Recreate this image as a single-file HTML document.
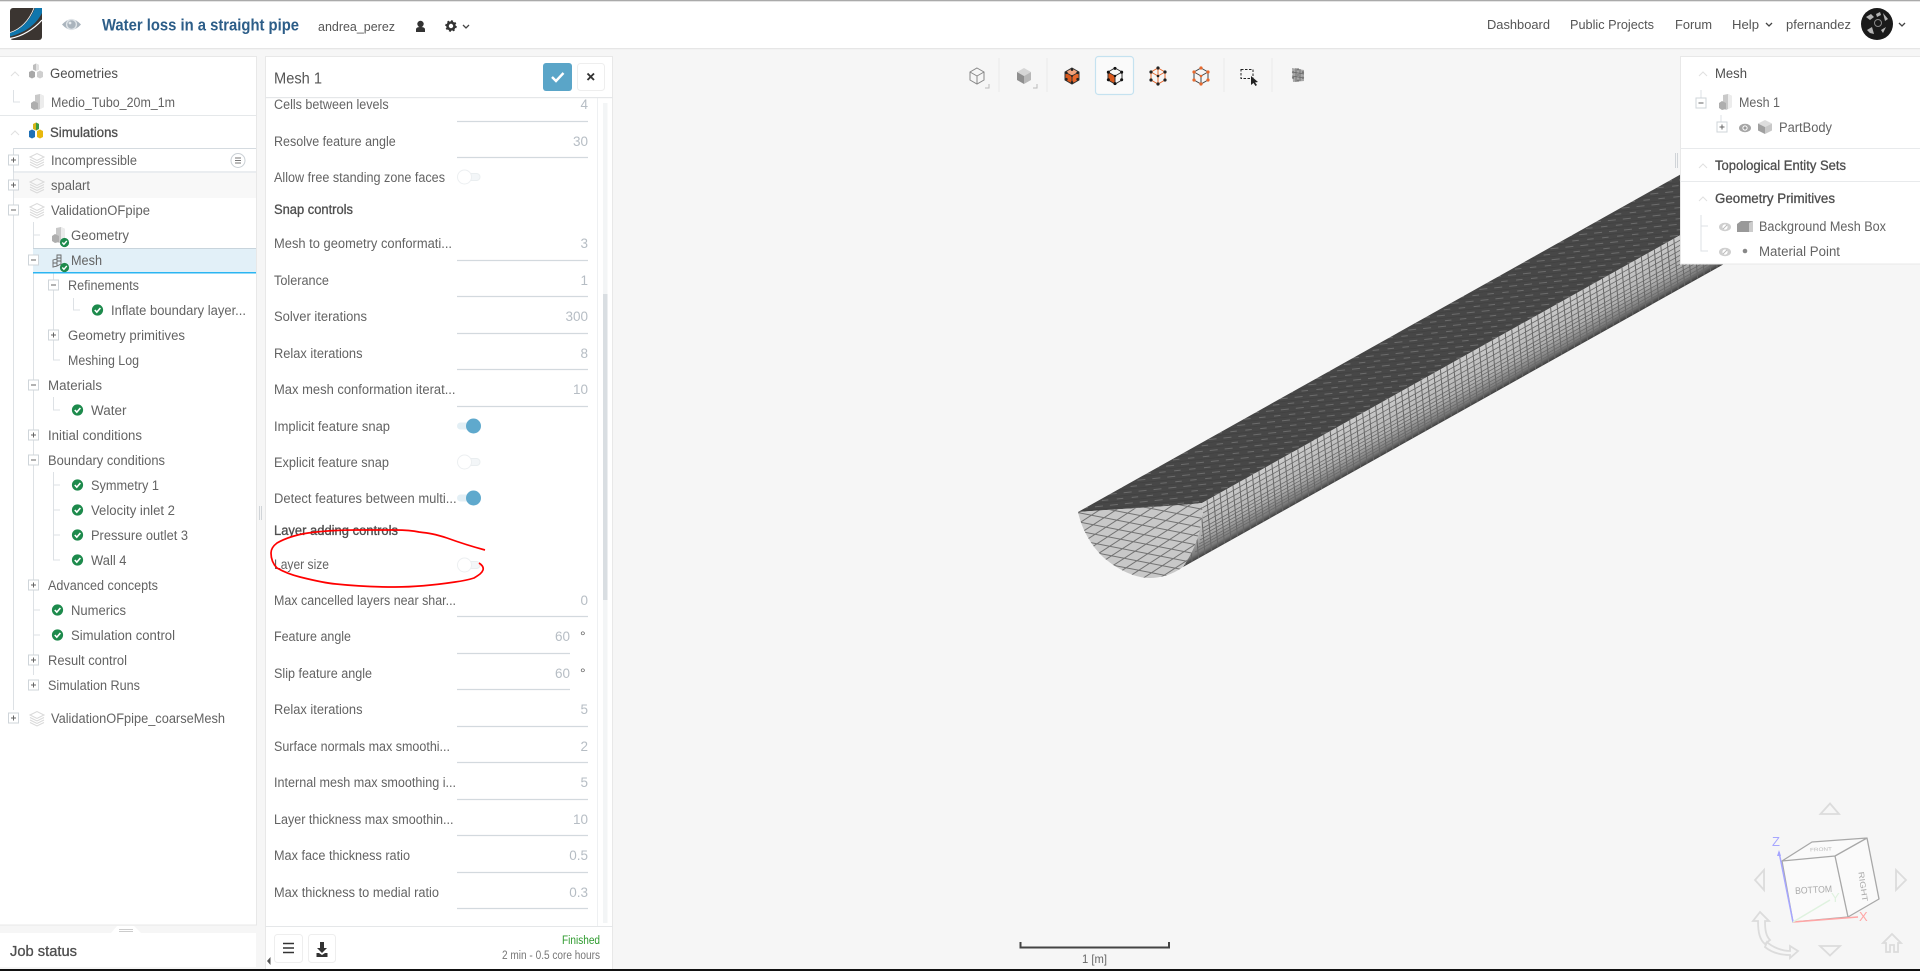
<!DOCTYPE html>
<html><head><meta charset="utf-8"><title>Water loss in a straight pipe</title>
<style>
html,body{margin:0;padding:0;background:#f6f6f6;overflow:hidden}
svg{display:block;position:absolute;left:0;top:0}
text{font-family:"Liberation Sans",sans-serif;font-size:13.5px;fill:#636363}
.b{fill:#4e4e4e;stroke:#4e4e4e;stroke-width:.3}
.s{font-size:14px;fill:#4e4e4e}
.sb{font-size:13.5px;fill:#4e4e4e;stroke:#4e4e4e;stroke-width:.3}
.v{fill:#b6bdc4;text-anchor:end}
.u{stroke:#d3d9de;stroke-width:1.2}
.c{stroke:#dde1e5;stroke-width:1;fill:none}
.nav{fill:none;stroke:#dcdcdc;stroke-width:1.8}
</style></head><body>
<svg width="1920" height="971" viewBox="0 0 1920 971" xmlns="http://www.w3.org/2000/svg">
<defs>
<pattern id="dash" width="15" height="11" patternUnits="userSpaceOnUse" patternTransform="rotate(-6)">
<rect width="15" height="11" fill="#474747"/>
<rect x="1" y="2" width="8" height="1" fill="#6c6c6c"/>
<rect x="8.5" y="7.5" width="8" height="1" fill="#6c6c6c"/>
<rect x="0" y="5" width="15" height=".7" fill="#404040"/>
<rect x="0" y="10" width="15" height=".7" fill="#404040"/>
</pattern>
<pattern id="cross" width="6.8" height="20" patternUnits="userSpaceOnUse" patternTransform="skewX(5)">
<rect width="1" height="20" fill="#666"/>
</pattern>
<pattern id="c1" width="9" height="9" patternUnits="userSpaceOnUse" patternTransform="rotate(11)">
<rect width="9" height="1" fill="#727272"/>
</pattern>
<pattern id="c2" width="9" height="9" patternUnits="userSpaceOnUse" patternTransform="rotate(-33)">
<rect width="9" height="1" fill="#727272"/>
</pattern>
<linearGradient id="side" gradientUnits="userSpaceOnUse" x1="1202" y1="503" x2="1225" y2="544">
<stop offset="0" stop-color="#cccccc"/><stop offset=".6" stop-color="#b0b0b0"/><stop offset=".88" stop-color="#7a7a7a"/><stop offset="1" stop-color="#3a3a3a"/>
</linearGradient>
<clipPath id="capc"><path d="M1078 512C1115 509 1165 507 1202 503C1204 525 1196 548 1183 567C1172 575 1160 578 1150 578C1135 578 1118 570 1103 557C1091 545 1082 530 1078 512Z"/></clipPath>
<clipPath id="sidec"><path d="M1202 503L1800 168V221.500L1183 567C1196 548 1204 525 1202 503Z"/></clipPath>
<g id="ck"><circle r="5.600" fill="#1d8a4c"/><path d="M-2.700 0L-.7 2.200L2.900-2" fill="none" stroke="#fff" stroke-width="1.600"/></g>
<g id="ck2"><circle r="4.600" fill="#1d8a4c"/><path d="M-2.200 0L-.6 1.800L2.300-1.600" fill="none" stroke="#fff" stroke-width="1.400"/></g>
<g id="pl"><rect x="-5" y="-5" width="10" height="10" fill="#fff" stroke="#cfd5da"/><path d="M-2.500 0H2.500M0-2.500V2.500" stroke="#666"/></g>
<g id="mn"><rect x="-5" y="-5" width="10" height="10" fill="#fff" stroke="#cfd5da"/><path d="M-2.500 0H2.500" stroke="#666"/></g>
<g id="ly" fill="none" stroke="#d9d9d9"><path d="M-7-3L0-6.500L7-3L0 .5Z"/><path d="M-7-.5L0 3L7-.5M-7 2L0 5.500L7 2M-7 4.500L0 8L7 4.500"/></g>
<g id="geo"><path d="M-2-7L3-8L7-6V5L1 8L-2 6Z" fill="#c9c9c9"/><path d="M3-8L7-6V5L3 7Z" fill="#ececec"/><path d="M-6 1L-3-1L1 1V7L-3 8L-6 6Z" fill="#aeaeae"/></g>
<g id="geos"><path d="M-3-8L0-9.500L3-8V-3.500L0-2L-3-3.500Z" fill="#bdbdbd"/><path d="M0-9.500L3-8V-3.500L0-2Z" fill="#e2e2e2"/><path d="M-7-1L-4-2.500L-1-1V4L-4 5.500L-7 4Z" fill="#a8a8a8"/><path d="M1-1L4-2.500L7-1V4L4 5.500L1 4Z" fill="#cfcfcf"/></g>
<g id="eye"><ellipse rx="6" ry="4.200" fill="#a6a6a6"/><circle r="2.600" fill="#fff"/><circle r="1.600" fill="#9a9a9a"/></g>
<g id="eyx"><ellipse rx="6" ry="4.200" fill="#cfcfcf"/><circle r="2.600" fill="#fff"/><path d="M-2 2L2-2" stroke="#bbb"/></g>
<g id="hx"><path d="M0-8L7-4V4L0 8L-7 4V-4Z"/><path d="M0 0L7-4M0 0L-7-4M0 0V8"/></g>
<g id="vb"><circle cx="0" cy="-8" r="1.600"/><circle cx="7" cy="-4" r="1.600"/><circle cx="7" cy="4" r="1.600"/><circle cx="0" cy="8" r="1.600"/><circle cx="-7" cy="4" r="1.600"/><circle cx="-7" cy="-4" r="1.600"/><circle r="1.300"/></g>
</defs>

<!-- 3D pipe -->
<path d="M1078 512L1800 107.500V168L1202 503C1165 507 1115 509 1078 512Z" fill="url(#dash)"/>
<path d="M1202 503L1800 168V221.500L1183 567C1196 548 1204 525 1202 503Z" fill="url(#side)"/>
<g clip-path="url(#sidec)">
<rect x="1170" y="90" width="750" height="490" fill="url(#cross)"/>
<g stroke="#6a6a6a" stroke-width=".8">
<path d="M1202 508L1800 173M1203 513L1800 178M1203 518L1800 183M1203 523L1800 188M1203 528L1800 193M1202 532L1800 197M1201 536L1800 201M1200 540L1800 205M1199 544L1800 209M1197 548L1800 213M1195 552L1800 216"/>
</g>
</g>
<path d="M1078 512C1115 509 1165 507 1202 503C1204 525 1196 548 1183 567C1172 575 1160 578 1150 578C1135 578 1118 570 1103 557C1091 545 1082 530 1078 512Z" fill="#c8c8c8"/>
<g clip-path="url(#capc)">
<rect x="1060" y="490" width="160" height="100" fill="url(#c1)"/>
<rect x="1060" y="490" width="160" height="100" fill="url(#c2)"/>
</g>

<!-- header -->
<rect width="1920" height="48" fill="#fff"/>
<rect width="1920" height="1.300" fill="#aaa"/>
<rect y="48" width="1920" height="1.200" fill="#e6e6e6"/>
<rect x="10" y="8" width="32" height="32" rx="3" fill="#3b3531"/>
<path d="M10 33C20 30 30 21 35 8H42V13C36 25 24 33 10 36.500Z" fill="#0f76ad"/>
<path d="M10 38.500C22 36.500 34 29 42 20" fill="none" stroke="#fff" stroke-width="1.200"/>
<path d="M10 32.500C20 29.500 29 21 34 8" fill="none" stroke="#fff" stroke-width=".8"/>
<path d="M62 24.500Q71.500 14 81 24.500Q71.500 35 62 24.500Z" fill="#aab4bd"/><circle cx="71.500" cy="24.500" r="5.600" fill="#dfe4e8"/><circle cx="71.500" cy="24.500" r="4.200" fill="#aab4bd"/><circle cx="70" cy="23" r="1.400" fill="#e6eaed"/>
<text x="102" y="30.500" textLength="197" lengthAdjust="spacingAndGlyphs" style="font-size:16.500px;font-weight:bold;fill:#2c5d88">Water loss in a straight pipe</text>
<text x="318" y="31" textLength="77" lengthAdjust="spacingAndGlyphs" style="font-size:13px;fill:#555">andrea_perez</text>
<circle cx="420.500" cy="24" r="3.200" fill="#333"/><path d="M416 32V29.500C416 27.500 418 27 420.500 27S425 27.500 425 29.500V32Z" fill="#333"/>
<circle cx="451" cy="26" r="3.500" fill="none" stroke="#333" stroke-width="2.600"/><circle cx="451" cy="26" r="5" fill="none" stroke="#333" stroke-width="1.500" stroke-dasharray="2 1.900"/>
<path d="M463 25L466 28L469 25" fill="none" stroke="#444" stroke-width="1.300"/>

<text x="1487" y="29" textLength="63" lengthAdjust="spacingAndGlyphs" style="font-size:13px;fill:#555">Dashboard</text>
<text x="1570" y="29" textLength="84" lengthAdjust="spacingAndGlyphs" style="font-size:13px;fill:#555">Public Projects</text>
<text x="1675" y="29" textLength="37" lengthAdjust="spacingAndGlyphs" style="font-size:13px;fill:#555">Forum</text>
<text x="1732" y="29" textLength="27" lengthAdjust="spacingAndGlyphs" style="font-size:13px;fill:#555">Help</text>
<path d="M1766 23L1769 26L1772 23" fill="none" stroke="#444" stroke-width="1.300"/>
<text x="1786" y="29" textLength="65" lengthAdjust="spacingAndGlyphs" style="font-size:13px;fill:#555">pfernandez</text>
<circle cx="1877" cy="24" r="16" fill="#1a1a1a"/>
<path d="M1866 17L1871 14L1874 17L1870 20ZM1883 13L1888 19L1885 21ZM1867 30L1872 27L1874 34L1870 33ZM1881 30L1886 27L1883 33ZM1876 14L1880 12L1881 15L1877 17Z" fill="#b5b5b5"/>
<circle cx="1878" cy="23" r="3.500" fill="none" stroke="#888"/>
<path d="M1899 23L1902 26L1905 23" fill="none" stroke="#444" stroke-width="1.300"/>

<!-- toolbar -->
<g stroke="#ebebeb"><path d="M999 58V92M1047 58V92M1224 58V92M1272 58V92"/></g>
<rect x="1095.500" y="56.500" width="38" height="38" rx="3" fill="#fafafa" stroke="#c5e2f0" stroke-width="1.200"/>
<use href="#hx" x="977" y="76" fill="none" stroke="#888"/>
<path d="M985 88H989V84" fill="none" stroke="#bbb"/>
<g transform="translate(1024 76)"><path d="M0-8L7-4L0 0L-7-4Z" fill="#d6d6d6"/><path d="M0 0L7-4V4L0 8Z" fill="#b8b8b8"/><path d="M0 0L-7-4V4L0 8Z" fill="#8f8f8f"/></g>
<path d="M1033 88H1037V84" fill="none" stroke="#bbb"/>
<g transform="translate(1072 76)"><path d="M0-8L7-4L0 0L-7-4Z" fill="#f0a27c"/><path d="M0 0L7-4V4L0 8Z" fill="#e8682c"/><path d="M0 0L-7-4V4L0 8Z" fill="#d9581c"/><use href="#hx" fill="none" stroke="#333"/><use href="#vb" fill="#222" transform="scale(.8)"/></g>
<g transform="translate(1115 76)"><path d="M0 0L-7-4V4L0 8Z" fill="#d9581c"/><use href="#hx" fill="none" stroke="#333"/><use href="#vb" fill="#111" transform="scale(.95)"/></g>
<g transform="translate(1158 76)"><use href="#hx" fill="none" stroke="#e8682c"/><path d="M0-8V0" stroke="#e8682c"/><use href="#vb" fill="#222"/></g>
<g transform="translate(1201 76)"><use href="#hx" fill="none" stroke="#444"/><use href="#vb" fill="#e8682c"/></g>
<rect x="1241" y="69.500" width="12" height="9" fill="none" stroke="#222" stroke-dasharray="2.500 1.500"/>
<path d="M1251 76L1251 85L1253.500 83L1255.500 86L1257 85L1255 82.500L1258 82Z" fill="#222"/>
<g transform="translate(1298 75)"><path d="M-6-7L6-5V6L-5 7Z" fill="#a8a8a8"/><path d="M-6-3L6-1M-6 1L6 3M-2-7V7M2-6V6" stroke="#666" stroke-width=".8"/><use href="#vb" fill="#777" transform="scale(.7)"/></g>

<!-- scale -->
<path d="M1020.500 942V947.500H1169V942" fill="none" stroke="#444" stroke-width="2"/>
<text x="1082" y="963" textLength="25" lengthAdjust="spacingAndGlyphs" style="font-size:12px;fill:#666">1 [m]</text>

<!-- nav cube -->
<path class="nav" d="M1830 803.500L1839 814H1820.500ZM1764 870V890L1755 880ZM1896 870V890L1906 880ZM1820 946H1840L1830 955.500Z"/>
<path class="nav" d="M1760 912L1753 921H1758C1758 933 1760 940 1765 944L1770 940C1766 936 1765 930 1765 921H1769Z" stroke-width="1.500"/>
<path class="nav" d="M1767 942C1772 947 1782 951 1790 951V946L1798 951L1790 958V955C1780 955 1771 952 1765 947Z" stroke-width="1.500"/>
<path class="nav" d="M1892 934L1901 943H1898V952H1894V945H1890V952H1886V943H1883Z" stroke-width="1.500"/>
<path d="M1782 861L1835 856L1848 917L1793 922ZM1782 861L1812 842L1867 838L1835 856ZM1835 856L1867 838L1879 899L1848 917Z" fill="#fafafa" stroke="#a8a8a8" stroke-width="1.300" stroke-linejoin="round"/>
<path d="M1793 922L1779 852" stroke="#a6a6ff" stroke-width="1.500"/><path d="M1779 850L1777 856H1781Z" fill="#a6a6ff"/>
<path d="M1793 922L1858 917" stroke="#ffa6a6" stroke-width="1.500"/>
<path d="M1793 922L1830 900" stroke="#dff2df" stroke-width="1.500"/>
<text x="1772" y="846" style="font-size:13px;fill:#a6a6ff">Z</text>
<text x="1859" y="921" style="font-size:13px;fill:#ffa6a6">X</text>
<text x="1831" y="902" style="font-size:13px;fill:#dff2df">Y</text>
<text x="1795" y="893" textLength="37" lengthAdjust="spacingAndGlyphs" transform="rotate(-3 1814 889)" style="font-size:9.500px;fill:#aaa">BOTTOM</text>
<text x="1848" y="884" textLength="30" lengthAdjust="spacingAndGlyphs" transform="rotate(82 1860 884)" style="font-size:8px;fill:#aaa">RIGHT</text>
<text x="1810" y="851" textLength="22" lengthAdjust="spacingAndGlyphs" transform="rotate(-3 1820 850)" style="font-size:5px;fill:#bbb">FRONT</text>

<!-- left panel -->
<rect x="0" y="57" width="256" height="868" fill="#fff"/>
<path d="M0 56.500H256.500V925H0" fill="none" stroke="#e8e8e8"/>
<path d="M0 115.500H256" stroke="#e5e8ea"/>
<path d="M11 76L15 72L19 76M11 135L15 131L19 135" fill="none" stroke="#e0e0e0"/>
<use href="#geos" x="36" y="73"/>
<use href="#geo" x="37" y="102"/>
<g transform="translate(36 133)"><path d="M-3-9L0-10.500L3-9V-4L0-2.500L-3-4Z" fill="#d4b61a"/><path d="M0-10.500L3-9V-4L0-2.500Z" fill="#3a9a46"/><path d="M-7-2L-4-3.500L-1-2V4L-4 5.500L-7 4Z" fill="#1f6fb5"/><path d="M1-2L4-3.500L7-2V4L4 5.500L1 4Z" fill="#e8b80e"/></g>
<text x="50" y="78" textLength="68" lengthAdjust="spacingAndGlyphs" class="s">Geometries</text>
<text x="51" y="107" textLength="124" lengthAdjust="spacingAndGlyphs">Medio_Tubo_20m_1m</text>
<text x="50" y="137" textLength="68" lengthAdjust="spacingAndGlyphs" class="sb">Simulations</text>

<path class="c" d="M13.500 90V102H20M13.500 148V710M33.500 222V675M33.500 235H40M33.500 610H40M33.500 635H40M53.500 272V360H60M73.500 298V310H80M53.500 397V410H60M53.500 472V560H60M53.500 485H60M53.500 510H60M53.500 535H60"/>

<path d="M13 148.500H256M13 172H256" stroke="#d5dbe0" fill="none"/>
<path d="M13.500 148.500V172" stroke="#d5dbe0"/>
<rect x="14" y="173" width="242" height="25" fill="#f8f8f8"/>
<rect x="33" y="248" width="223" height="24" fill="#e2f0f8"/>
<rect x="33" y="248" width="223" height="1" fill="#c8d4dc"/>
<rect x="33" y="272" width="223" height="1.500" fill="#2bb5f2"/>

<use href="#pl" x="13.500" y="160"/><use href="#pl" x="13.500" y="185"/><use href="#mn" x="13.500" y="210"/><use href="#pl" x="13.500" y="718"/>
<use href="#ly" x="37" y="160"/><use href="#ly" x="37" y="185"/><use href="#ly" x="37" y="210"/><use href="#ly" x="37" y="718"/>
<circle cx="238" cy="160.500" r="7" fill="#fff" stroke="#c9cfd4"/><path d="M235 158H241M235 160.500H241M235 163H241" stroke="#777"/>
<use href="#mn" x="33.500" y="260"/><use href="#mn" x="53.500" y="285"/><use href="#pl" x="53.500" y="335"/><use href="#mn" x="33.500" y="385"/><use href="#pl" x="33.500" y="435"/><use href="#mn" x="33.500" y="460"/><use href="#pl" x="33.500" y="585"/><use href="#pl" x="33.500" y="660"/><use href="#pl" x="33.500" y="685"/>
<use href="#geo" x="58" y="235"/><use href="#ck2" x="64.500" y="242.500"/>
<g transform="translate(58 261)" fill="none" stroke="#666" stroke-width=".9"><path d="M-1-6L3-6V3L-1 5ZM-5-1L-1-2V5L-5 6ZM-1-3H3M-1 0H3M-5 2H-1"/></g><use href="#ck2" x="64.500" y="267.500"/>
<use href="#ck" x="97.500" y="310"/><use href="#ck" x="77.500" y="410"/><use href="#ck" x="77.500" y="485"/><use href="#ck" x="77.500" y="510"/><use href="#ck" x="77.500" y="535"/><use href="#ck" x="77.500" y="560"/><use href="#ck" x="57.500" y="610"/><use href="#ck" x="57.500" y="635"/>

<text x="51" y="165" textLength="86" lengthAdjust="spacingAndGlyphs">Incompressible</text>
<text x="51" y="190" textLength="39" lengthAdjust="spacingAndGlyphs">spalart</text>
<text x="51" y="215" textLength="99" lengthAdjust="spacingAndGlyphs">ValidationOFpipe</text>
<text x="71" y="240" textLength="58" lengthAdjust="spacingAndGlyphs">Geometry</text>
<text x="71" y="265" textLength="31" lengthAdjust="spacingAndGlyphs">Mesh</text>
<text x="68" y="290" textLength="71" lengthAdjust="spacingAndGlyphs">Refinements</text>
<text x="111" y="315" textLength="135" lengthAdjust="spacingAndGlyphs">Inflate boundary layer...</text>
<text x="68" y="340" textLength="117" lengthAdjust="spacingAndGlyphs">Geometry primitives</text>
<text x="68" y="365" textLength="71" lengthAdjust="spacingAndGlyphs">Meshing Log</text>
<text x="48" y="390" textLength="54" lengthAdjust="spacingAndGlyphs">Materials</text>
<text x="91" y="415" textLength="35.500" lengthAdjust="spacingAndGlyphs">Water</text>
<text x="48" y="440" textLength="94" lengthAdjust="spacingAndGlyphs">Initial conditions</text>
<text x="48" y="465" textLength="117" lengthAdjust="spacingAndGlyphs">Boundary conditions</text>
<text x="91" y="490" textLength="68" lengthAdjust="spacingAndGlyphs">Symmetry 1</text>
<text x="91" y="515" textLength="84" lengthAdjust="spacingAndGlyphs">Velocity inlet 2</text>
<text x="91" y="540" textLength="97" lengthAdjust="spacingAndGlyphs">Pressure outlet 3</text>
<text x="91" y="565" textLength="35.500" lengthAdjust="spacingAndGlyphs">Wall 4</text>
<text x="48" y="590" textLength="110" lengthAdjust="spacingAndGlyphs">Advanced concepts</text>
<text x="71" y="615" textLength="55" lengthAdjust="spacingAndGlyphs">Numerics</text>
<text x="71" y="640" textLength="104" lengthAdjust="spacingAndGlyphs">Simulation control</text>
<text x="48" y="665" textLength="79" lengthAdjust="spacingAndGlyphs">Result control</text>
<text x="48" y="690" textLength="92" lengthAdjust="spacingAndGlyphs">Simulation Runs</text>
<text x="51" y="723" textLength="174" lengthAdjust="spacingAndGlyphs">ValidationOFpipe_coarseMesh</text>

<!-- job status -->
<rect x="0" y="933" width="256" height="34" fill="#fff"/>
<path d="M111 933L117 926H134L141 933Z" fill="#fff"/>
<path d="M119 929.500H133M119 931.500H133" stroke="#ccc" fill="none"/>
<text x="10" y="956" textLength="67" lengthAdjust="spacingAndGlyphs" style="font-size:15px;fill:#4e4e4e;stroke:#4e4e4e;stroke-width:.3">Job status</text>
<path d="M259.500 506V520M261.500 506V520" stroke="#d0d4d8"/>

<!-- mesh panel -->
<rect x="265" y="57" width="348" height="912" fill="#fff"/>
<path d="M265 56.500H613M265.500 57V969M612.500 57V969" stroke="#e8e8e8" fill="none"/>
<rect x="603" y="103" width="4.500" height="820" fill="#f3f5f6"/>
<rect x="603" y="294" width="4.500" height="306" fill="#d9dee2"/>
<path d="M597.500 97V926" stroke="#eef0f2"/>

<path class="u" d="M457 121.500H588M457 157.500H588M457 260.500H588M457 296.500H588M457 333.500H588M457 369.500H588M457 406.500H588M457 616.500H588M457 653.500H570M457 689.500H570M457 726.500H588M457 762.500H588M457 799.500H588M457 835.500H588M457 872.500H588M457 908.500H588"/>

<text x="274" y="109" textLength="114.600" lengthAdjust="spacingAndGlyphs">Cells between levels</text><text x="588" y="109" class="v">4</text>
<text x="274" y="146" textLength="121.700" lengthAdjust="spacingAndGlyphs">Resolve feature angle</text><text x="588" y="146" class="v">30</text>
<text x="274" y="182" textLength="171" lengthAdjust="spacingAndGlyphs">Allow free standing zone faces</text>
<text x="274" y="214" textLength="79" lengthAdjust="spacingAndGlyphs" class="b">Snap controls</text>
<text x="274" y="248" textLength="178" lengthAdjust="spacingAndGlyphs">Mesh to geometry conformati...</text><text x="588" y="248" class="v">3</text>
<text x="274" y="285" textLength="55" lengthAdjust="spacingAndGlyphs">Tolerance</text><text x="588" y="285" class="v">1</text>
<text x="274" y="321" textLength="93" lengthAdjust="spacingAndGlyphs">Solver iterations</text><text x="588" y="321" class="v">300</text>
<text x="274" y="358" textLength="88.500" lengthAdjust="spacingAndGlyphs">Relax iterations</text><text x="588" y="358" class="v">8</text>
<text x="274" y="394" textLength="181.500" lengthAdjust="spacingAndGlyphs">Max mesh conformation iterat...</text><text x="588" y="394" class="v">10</text>
<text x="274" y="431" textLength="116" lengthAdjust="spacingAndGlyphs">Implicit feature snap</text>
<text x="274" y="467" textLength="115" lengthAdjust="spacingAndGlyphs">Explicit feature snap</text>
<text x="274" y="503" textLength="182.600" lengthAdjust="spacingAndGlyphs">Detect features between multi...</text>
<text x="274" y="535" textLength="124" lengthAdjust="spacingAndGlyphs" class="b">Layer adding controls</text>
<text x="274" y="569" textLength="55" lengthAdjust="spacingAndGlyphs">Layer size</text>
<text x="274" y="605" textLength="182" lengthAdjust="spacingAndGlyphs">Max cancelled layers near shar...</text><text x="588" y="605" class="v">0</text>
<text x="274" y="641" textLength="77" lengthAdjust="spacingAndGlyphs">Feature angle</text><text x="570" y="641" class="v">60</text><text x="580" y="641" style="font-size:14px">°</text>
<text x="274" y="678" textLength="98" lengthAdjust="spacingAndGlyphs">Slip feature angle</text><text x="570" y="678" class="v">60</text><text x="580" y="678" style="font-size:14px">°</text>
<text x="274" y="714" textLength="88.500" lengthAdjust="spacingAndGlyphs">Relax iterations</text><text x="588" y="714" class="v">5</text>
<text x="274" y="751" textLength="176" lengthAdjust="spacingAndGlyphs">Surface normals max smoothi...</text><text x="588" y="751" class="v">2</text>
<text x="274" y="787" textLength="182" lengthAdjust="spacingAndGlyphs">Internal mesh max smoothing i...</text><text x="588" y="787" class="v">5</text>
<text x="274" y="824" textLength="179.500" lengthAdjust="spacingAndGlyphs">Layer thickness max smoothin...</text><text x="588" y="824" class="v">10</text>
<text x="274" y="860" textLength="136" lengthAdjust="spacingAndGlyphs">Max face thickness ratio</text><text x="588" y="860" class="v">0.5</text>
<text x="274" y="897" textLength="165" lengthAdjust="spacingAndGlyphs">Max thickness to medial ratio</text><text x="588" y="897" class="v">0.3</text>
<text x="274" y="936" textLength="120" lengthAdjust="spacingAndGlyphs">Min medial ranging angle</text><text x="570" y="936" class="v">90</text><text x="580" y="936" style="font-size:14px">°</text>

<!-- toggles -->
<g transform="translate(0 177)"><rect x="460" y="-3.500" width="20" height="7" rx="3.500" fill="#f3f6f8" stroke="#eaeef0"/><circle cx="464.500" r="7" fill="#fff" stroke="#eceff1"/></g>
<g transform="translate(0 426)"><rect x="457" y="-3.500" width="20" height="7" rx="3.500" fill="#e3eff5"/><circle cx="473.500" r="7.500" fill="#5fa9cd"/></g>
<g transform="translate(0 462)"><rect x="460" y="-3.500" width="20" height="7" rx="3.500" fill="#f3f6f8" stroke="#eaeef0"/><circle cx="464.500" r="7" fill="#fff" stroke="#eceff1"/></g>
<g transform="translate(0 498)"><rect x="457" y="-3.500" width="20" height="7" rx="3.500" fill="#e3eff5"/><circle cx="473.500" r="7.500" fill="#5fa9cd"/></g>
<g transform="translate(0 565)"><rect x="460" y="-3.500" width="20" height="7" rx="3.500" fill="#f3f6f8" stroke="#eaeef0"/><circle cx="464.500" r="7" fill="#fff" stroke="#eceff1"/></g>

<!-- panel header -->
<rect x="266" y="57" width="346" height="40" fill="#fff"/>
<rect x="265" y="97" width="348" height="1.200" fill="#e5e7e9"/>
<text x="274" y="83.500" textLength="48" lengthAdjust="spacingAndGlyphs" style="font-size:15.500px;fill:#555">Mesh 1</text>
<rect x="543" y="63" width="29" height="28" rx="3" fill="#5aa5c8"/>
<path d="M552 77L556 81L563.500 73" fill="none" stroke="#fff" stroke-width="2.400"/>
<rect x="577.500" y="63.500" width="27" height="27" rx="3" fill="#fff" stroke="#eeeeee"/>
<path d="M587.500 73.500L594 80M594 73.500L587.500 80" stroke="#333" stroke-width="1.900"/>

<!-- panel footer -->
<rect x="266" y="926" width="346" height="43" fill="#fff"/>
<rect x="265" y="926" width="348" height="1" fill="#e5e7e9"/>
<rect x="274.500" y="934.500" width="28" height="28" rx="3" fill="#fff" stroke="#eeeeee"/>
<rect x="308.500" y="934.500" width="27" height="28" rx="3" fill="#fff" stroke="#eeeeee"/>
<path d="M283 943.500H294M283 948H294M283 952.500H294" stroke="#333" stroke-width="1.500"/>
<path d="M320 942H324V948H327L322 953L317 948H320ZM316.500 953H319L322 955L325 953H327.500V957H316.500Z" fill="#333"/>
<path d="M270.500 957V965L267 961Z" fill="#555"/>
<text x="562" y="944" textLength="38" lengthAdjust="spacingAndGlyphs" style="font-size:11.500px;fill:#2d9a2d">Finished</text>
<text x="502" y="959" textLength="98" lengthAdjust="spacingAndGlyphs" style="font-size:11.500px;fill:#777">2 min - 0.5 core hours</text>

<!-- red annotation -->
<path d="M485 550C470 546 458 542 447 538C435 534 428 533 419 532C410 530 400 530 395 530C380 530 368 530 356 530C338 530 322 531 308 533C295 535 284 539 277 543C273 546 271 549 271 553C271 559 273 564 277 568C284 572 292 575 300 577C312 580 324 583 336 584C355 586 375 587 395 587C415 587 435 585 455 582C462 581 468 580 474 578C479 575 482 573 483 570C484 567 482 565 479 563" fill="none" stroke="#f00" stroke-width="1.700"/>

<!-- right panel -->
<rect x="1680" y="57" width="240" height="207" fill="#fff"/>
<path d="M1680.500 57V264H1920M1680 56.500H1920" stroke="#e8e8e8" fill="none"/>
<path d="M1675.500 153V168M1677.500 153V168" stroke="#d0d4d8"/>
<path d="M1680 148.500H1920M1680 181.500H1920" stroke="#e8eaec"/>
<path d="M1699 76L1703 72L1707 76M1699 168L1703 164L1707 168M1699 201L1703 197L1707 201" fill="none" stroke="#e0e0e0"/>
<path class="c" d="M1701 90V98M1721 115V122M1701 215V251H1708M1701 226H1708"/>
<use href="#mn" x="1701" y="103"/><use href="#pl" x="1722" y="127"/>
<use href="#geo" x="1725" y="102"/>
<use href="#eye" x="1745" y="128"/>
<g transform="translate(1765 127)"><path d="M0-7L7-3.500L0 0L-7-3.500Z" fill="#ddd"/><path d="M0 0L7-3.500V3.500L0 7Z" fill="#c8c8c8"/><path d="M0 0L-7-3.500V3.500L0 7Z" fill="#a0a0a0"/></g>
<use href="#eyx" x="1725" y="227"/><use href="#eyx" x="1725" y="252"/>
<path d="M1737 224L1741 221H1753V232H1737Z" fill="#999"/><path d="M1749 223L1753 221V232L1749 232Z" fill="#ccc"/>
<circle cx="1745" cy="251" r="2.300" fill="#888"/>
<text x="1715" y="78" textLength="32" lengthAdjust="spacingAndGlyphs" class="s">Mesh</text>
<text x="1739" y="107" textLength="41" lengthAdjust="spacingAndGlyphs">Mesh 1</text>
<text x="1779" y="132" textLength="53" lengthAdjust="spacingAndGlyphs">PartBody</text>
<text x="1715" y="170" textLength="131" lengthAdjust="spacingAndGlyphs" class="sb">Topological Entity Sets</text>
<text x="1715" y="203" textLength="120" lengthAdjust="spacingAndGlyphs" class="sb">Geometry Primitives</text>
<text x="1759" y="231" textLength="127" lengthAdjust="spacingAndGlyphs">Background Mesh Box</text>
<text x="1759" y="256" textLength="81" lengthAdjust="spacingAndGlyphs">Material Point</text>

<!-- bottom edge -->
<rect x="0" y="969" width="1920" height="2" fill="#111"/>
</svg>
</body></html>
